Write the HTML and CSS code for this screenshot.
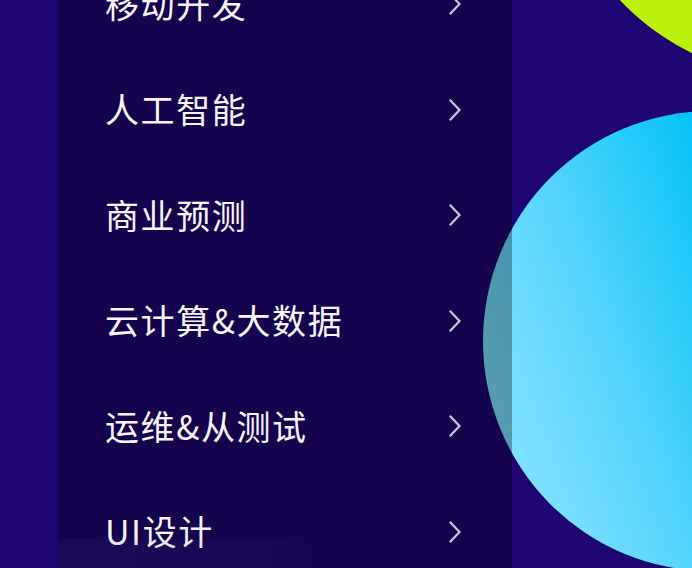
FILE: index.html
```html
<!DOCTYPE html>
<html lang="zh">
<head>
<meta charset="utf-8">
<title>课程分类</title>
<link rel="stylesheet" href="styles.css">
</head>
<body>
<div class="stage">
  <div class="blob blob-lime"></div>
  <div class="blob blob-cyan"></div>
  <nav class="panel">
    <ul class="menu">
      <li class="item"><span class="label">移动开发</span><svg class="chev" viewBox="0 0 12 22" width="12" height="22"><polyline points="1.5,1.5 10.5,11 1.5,20.5"/></svg></li>
      <li class="item"><span class="label">人工智能</span><svg class="chev" viewBox="0 0 12 22" width="12" height="22"><polyline points="1.5,1.5 10.5,11 1.5,20.5"/></svg></li>
      <li class="item"><span class="label">商业预测</span><svg class="chev" viewBox="0 0 12 22" width="12" height="22"><polyline points="1.5,1.5 10.5,11 1.5,20.5"/></svg></li>
      <li class="item"><span class="label">云计算&amp;大数据</span><svg class="chev" viewBox="0 0 12 22" width="12" height="22"><polyline points="1.5,1.5 10.5,11 1.5,20.5"/></svg></li>
      <li class="item"><span class="label">运维&amp;从测试</span><svg class="chev" viewBox="0 0 12 22" width="12" height="22"><polyline points="1.5,1.5 10.5,11 1.5,20.5"/></svg></li>
      <li class="item"><span class="label">UI设计</span><svg class="chev" viewBox="0 0 12 22" width="12" height="22"><polyline points="1.5,1.5 10.5,11 1.5,20.5"/></svg></li>
    </ul>
    <div class="shade"></div>
  </nav>
</div>
</body>
</html>
```
FILE: styles.css
```css
* { box-sizing: border-box; }
html, body {
  margin: 0;
  padding: 0;
  width: 692px;
  height: 568px;
  overflow: hidden;
}
body {
  background: #1f0571;
  font-family: "Noto Sans CJK SC", "Noto Sans", sans-serif;
}
.stage {
  position: relative;
  width: 692px;
  height: 568px;
  overflow: hidden;
}
.blob {
  position: absolute;
  border-radius: 50%;
}
.blob-lime {
  left: 551px;
  top: -425px;
  width: 504px;
  height: 504px;
  background: linear-gradient(200deg, #a8ef1a 0%, #b6f010 60%, #bff00c 100%);
}
.blob-cyan {
  left: 483px;
  top: 111px;
  width: 456px;
  height: 460px;
  background: linear-gradient(70deg, #86e3ff 8%, #5dd6fc 30%, #00c2f6 62%);
}
.panel {
  position: relative;
  margin-left: 58px;
  width: 454px;
  height: 568px;
  background: rgba(0, 0, 0, 0.31);
  padding: 0 51px 0 47px;
  overflow: hidden;
}
.menu {
  list-style: none;
  margin: -49px 0 0 0;
  padding: 0;
}
.item {
  height: 105.5px;
  display: flex;
  align-items: center;
  justify-content: space-between;
}
.label {
  color: #f6f5fa;
  font-size: 34px;
  letter-spacing: 1.6px;
  line-height: 1;
}
.chev {
  display: block;
  margin-top: 1px;
}
.chev polyline {
  fill: none;
  stroke: #c9c5dd;
  stroke-width: 2.2;
  stroke-linecap: square;
  stroke-linejoin: miter;
}
.shade {
  position: absolute;
  left: 0;
  top: 539px;
  width: 100%;
  height: 29px;
  background: linear-gradient(to right, rgba(70, 70, 170, 0.10), rgba(70, 70, 170, 0.05) 45%, rgba(70, 70, 170, 0) 60%);
}
```
